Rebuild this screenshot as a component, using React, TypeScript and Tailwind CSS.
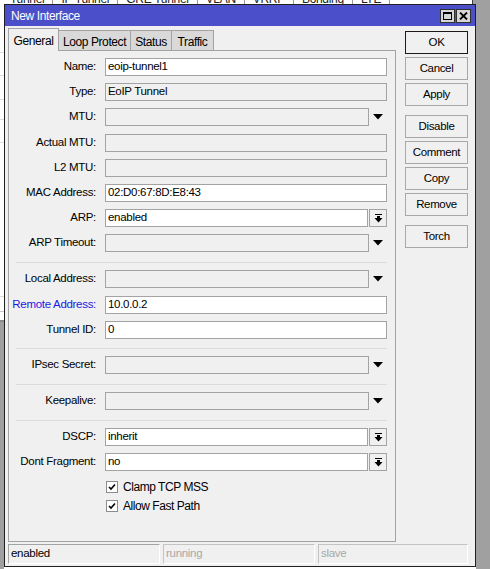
const FONT = "font-['Liberation_Sans',Arial,sans-serif]";

function DownArrow() {
  return (
    <svg width="10" height="6" viewBox="0 0 10 6">
      <polygon points="0,0 10,0 5,5.5" fill="#000" />
    </svg>
  );
}

function ComboIcon() {
  return (
    <svg width="9" height="9" viewBox="0 0 9 9">
      <rect x="1" y="0" width="7" height="1" fill="#000" />
      <rect x="3" y="2" width="3" height="2" fill="#000" />
      <polygon points="0.5,4 8.5,4 4.5,8.5" fill="#000" />
    </svg>
  );
}

type Kind = "text" | "readonly" | "dropdown" | "combo";

function Field({
  label,
  value = "",
  kind,
  mt,
  blue,
}: {
  label: string;
  value?: string;
  kind: Kind;
  mt: string;
  blue?: boolean;
}) {
  const white = kind === "text" || kind === "combo";
  return (
    <div className={`flex items-center h-[18px] ${mt}`}>
      <div
        className={`w-[88px] text-right whitespace-nowrap pr-px ${blue ? "text-[#1a1ae6]" : "text-black"}`}
      >
        {label}
      </div>
      <div className="ml-[8px] flex flex-1 mr-[8px] h-full">
        <div
          className={`flex-1 h-full border border-[#a3a3a3] flex items-center pl-[2px] ${white ? "bg-white" : "bg-[#f0f0f0]"}`}
        >
          {value}
        </div>
        {kind === "dropdown" && (
          <div className="w-[18px] flex items-center justify-center">
            <DownArrow />
          </div>
        )}
        {kind === "combo" && (
          <div className="ml-px w-[18px] h-full border border-[#a3a3a3] bg-[#f0f0f0] flex items-center justify-center">
            <ComboIcon />
          </div>
        )}
      </div>
    </div>
  );
}

function Sep({ mt }: { mt: string }) {
  return <div className={`h-px bg-[#dcdcdc] ml-[7px] mr-[8px] ${mt}`} />;
}

function Check({ label, mt }: { label: string; mt: string }) {
  return (
    <div className={`flex items-center h-[19px] ${mt}`}>
      <div className="ml-[97px] w-[12px] h-[12px] border border-[#8c8c8c] bg-white flex items-center justify-center">
        <svg width="8" height="8" viewBox="0 0 8 8">
          <path d="M1 4 L3 6 L7 1.5" stroke="#000" strokeWidth="1.6" fill="none" />
        </svg>
      </div>
      <span className="ml-[5px] text-[12px] tracking-[-0.45px]">{label}</span>
    </div>
  );
}

function SideButton({ label, primary, mt }: { label: string; primary?: boolean; mt: string }) {
  return (
    <button
      type="button"
      className={`w-[63px] h-[23px] bg-[#f0f0f0] text-[11.5px] tracking-[-0.35px] text-black border ${primary ? "border-[#1a1a1a]" : "border-[#a8a8a8]"} ${mt}`}
    >
      {label}
    </button>
  );
}

function Tab({ label, w, active }: { label: string; w: string; active?: boolean }) {
  return (
    <div
      className={
        active
          ? `${w} h-[23px] -mb-px z-10 pt-[3px] text-center bg-[#f0f0f0] border border-b-0 border-[#a3a3a3]`
          : `${w} h-[20px] pt-[2px] text-center bg-[#d9d9d9] border-t border-r border-[#a3a3a3]`
      }
    >
      {label}
    </div>
  );
}

const bgTabs = ["Tunnel", "IP Tunnel", "GRE Tunnel", "VLAN", "VRRP", "Bonding", "LTE"];

export default function App() {
  return (
    <div
      className={`w-[490px] h-[569px] overflow-hidden bg-white flex flex-col text-[11.5px] tracking-[-0.3px] text-black ${FONT}`}
    >
      {/* window behind, tab strip */}
      <div className="h-[4px] flex overflow-hidden">
        <div className="w-[473px] flex items-end overflow-hidden border-r border-[#404040]">
          <div className="flex items-end h-[14px] -mb-[1px] pl-[2px]">
            {bgTabs.map((t) => (
              <div key={t} className="px-[8px] border-r border-[#9a9a9a] text-[12px] leading-[12px] h-[12px] text-[#222]">
                {t}
              </div>
            ))}
          </div>
        </div>
        <div className="flex-1 bg-[#a0a0a0]" />
      </div>

      <div className="flex flex-1">
        {/* left strip of list behind */}
        <div className="w-[4px] flex flex-col">
          <div className="h-[49px] border-b border-[#dedede]" />
          <div className="h-[23px] border-b border-[#dedede]" />
          <div className="h-[24px] border-b border-[#dedede]" />
          <div className="h-[20px] border-b border-[#dedede]" />
          <div className="h-[23px] border-b border-[#dedede]" />
          <div className="h-[154px] border-b border-[#dedede]" />
          <div className="h-[15px] border-b border-[#c8c8c8]" />
          <div className="h-[10px] border-b-2 border-[#8a8a8a]" />
          <div className="flex-1 bg-[#a0a0a0]" />
        </div>

        {/* dialog */}
        <div className="w-[472px] h-[563px] border border-[#202020] bg-[#f0f0f0] flex flex-col">
          <div className="h-[21px] bg-[#4b4fc9] flex items-center pl-[6px] pr-[4px]">
            <span className="text-white text-[12px] tracking-[-0.4px] flex-1">New Interface</span>
            <div className="flex gap-px">
              <div className="w-[15px] h-[14px] bg-[#d6d6d6] border border-[#303030] flex items-center justify-center">
                <div className="w-[9px] h-[8px] border border-black border-t-2" />
              </div>
              <div className="w-[15px] h-[14px] bg-[#d6d6d6] border border-[#303030] flex items-center justify-center">
                <svg width="9" height="8" viewBox="0 0 9 8">
                  <path d="M1 0.5 L8 7.5 M8 0.5 L1 7.5" stroke="#000" strokeWidth="1.8" />
                </svg>
              </div>
            </div>
          </div>

          <div className="flex-1 flex flex-col pt-[2px] pl-[2px] pr-[7px] pb-[2px]">
            <div className="flex flex-1">
              {/* tabs + panel */}
              <div className="w-[388px] ml-px flex flex-col">
                <div className="flex h-[22px] items-end text-[12px] tracking-[-0.4px]">
                  <Tab label="General" w="w-[51px]" active />
                  <Tab label="Loop Protect" w="w-[72px]" />
                  <Tab label="Status" w="w-[41px]" />
                  <Tab label="Traffic" w="w-[42px]" />
                </div>
                <div className="h-[492px] border border-[#a3a3a3] flex flex-col pt-[7px]">
                  <Field label="Name:" value="eoip-tunnel1" kind="text" mt="" />
                  <Field label="Type:" value="EoIP Tunnel" kind="readonly" mt="mt-[7px]" />
                  <Field label="MTU:" kind="dropdown" mt="mt-[7px]" />
                  <Field label="Actual MTU:" kind="readonly" mt="mt-[8px]" />
                  <Field label="L2 MTU:" kind="readonly" mt="mt-[7px]" />
                  <Field label="MAC Address:" value="02:D0:67:8D:E8:43" kind="text" mt="mt-[7px]" />
                  <Field label="ARP:" value="enabled" kind="combo" mt="mt-[7px]" />
                  <Field label="ARP Timeout:" kind="dropdown" mt="mt-[7px]" />
                  <Sep mt="mt-[10px]" />
                  <Field label="Local Address:" kind="dropdown" mt="mt-[7px]" />
                  <Field label="Remote Address:" value="10.0.0.2" kind="text" mt="mt-[8px]" blue />
                  <Field label="Tunnel ID:" value="0" kind="text" mt="mt-[7px]" />
                  <Sep mt="mt-[9px]" />
                  <Field label="IPsec Secret:" kind="dropdown" mt="mt-[7px]" />
                  <Sep mt="mt-[10px]" />
                  <Field label="Keepalive:" kind="dropdown" mt="mt-[7px]" />
                  <Sep mt="mt-[10px]" />
                  <Field label="DSCP:" value="inherit" kind="combo" mt="mt-[7px]" />
                  <Field label="Dont Fragment:" value="no" kind="combo" mt="mt-[7px]" />
                  <Check label="Clamp TCP MSS" mt="mt-[6px]" />
                  <Check label="Allow Fast Path" mt="" />
                </div>
              </div>

              {/* buttons */}
              <div className="ml-[9px] flex flex-col pt-[3px]">
                <SideButton label="OK" primary mt="" />
                <SideButton label="Cancel" mt="mt-[3px]" />
                <SideButton label="Apply" mt="mt-[3px]" />
                <SideButton label="Disable" mt="mt-[9px]" />
                <SideButton label="Comment" mt="mt-[3px]" />
                <SideButton label="Copy" mt="mt-[3px]" />
                <SideButton label="Remove" mt="mt-[3px]" />
                <SideButton label="Torch" mt="mt-[9px]" />
              </div>
            </div>

            {/* status bar */}
            <div className="h-[20px] mt-[2px] flex gap-[3px] pl-px">
              <div className="w-[152px] border-t border-l border-[#a3a3a3] border-r border-b border-r-white border-b-white pl-[2px] flex items-center">
                enabled
              </div>
              <div className="w-[152px] border-t border-l border-[#c4c4c4] border-r border-b border-r-white border-b-white pl-[2px] flex items-center text-[#a8a8a8]">
                running
              </div>
              <div className="flex-1 border-t border-l border-[#c4c4c4] border-r border-b border-r-white border-b-white pl-[2px] flex items-center text-[#a8a8a8]">
                slave
              </div>
            </div>
          </div>
        </div>

        <div className="flex-1 bg-[#a0a0a0]" />
      </div>
    </div>
  );
}
